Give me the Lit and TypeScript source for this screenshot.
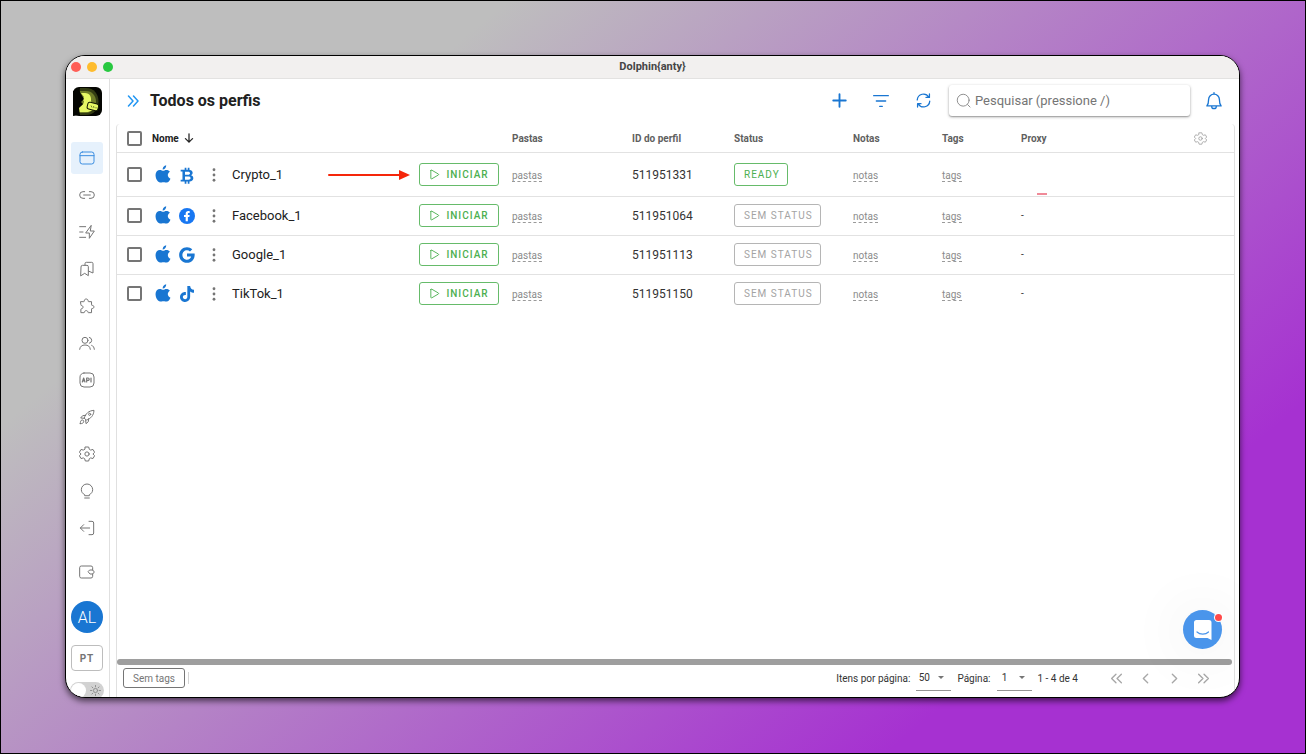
import { LitElement, html, svg, css, nothing, TemplateResult } from "lit";
import { customElement, state } from "lit/decorators.js";
import { classMap } from "lit/directives/class-map.js";

interface Profile {
  name: string;
  id: string;
  brand: string;
  ready: boolean;
  highlighted?: boolean;
}

const PROFILES: Profile[] = [
  { name: "Crypto_1", id: "511951331", brand: "bitcoin", ready: true, highlighted: true },
  { name: "Facebook_1", id: "511951064", brand: "facebook", ready: false },
  { name: "Google_1", id: "511951113", brand: "google", ready: false },
  { name: "TikTok_1", id: "511951150", brand: "tiktok", ready: false },
];

// Stroke icons, drawn on a 24 unit grid.
const LINE: Record<string, TemplateResult> = {
  browser: svg`<rect x="1.5" y="3" width="21" height="18" rx="3.5"/><path d="M1.5 8.5h21"/>`,
  link: svg`<path d="M8.500 7H6a5 5 0 0 0 0 10h2.500M15.500 7H18a5 5 0 0 1 0 10h-2.500M7 12h10"/>`,
  automation: svg`<path d="M1 4h9M1 12h5M1 20h9M18 2.500 10 13.500h5.500v8L23 10.500h-5.500z"/>`,
  bookmarks: svg`<path d="M3 8.500a2 2 0 0 1 2-2h7a2 2 0 0 1 2 2V22l-5.500-3.500L3 22zM9 6.500V4a2 2 0 0 1 2-2h8a2 2 0 0 1 2 2v14l-7-3"/>`,
  puzzle: svg`<path d="M4 5.500h4.200c.6 0 .9-.3.9-.9C9.100 2.500 10.300 1.500 12 1.500s2.900 1 2.900 3.100c0 .6.300.9.900.9H20v4.700c0 .6.300.8.900.8 1.700 0 2.600.9 2.600 2.400s-.9 2.400-2.600 2.400c-.6 0-.9.200-.9.800V22h-4.600c-.5 0-.7-.3-.8-.8-.3-1.600-1.200-2.300-2.600-2.300s-2.300.7-2.600 2.300c-.1.500-.3.800-.8.800H4v-4.900c0-.6.200-.8.700-.9 1.700-.2 2.500-1.100 2.500-2.500s-.8-2.300-2.500-2.500c-.5-.1-.7-.3-.7-.9z" transform="translate(-1.200 0)"/>`,
  users: svg`<circle cx="9" cy="8" r="4.500"/><path d="M1 21.500c.5-4.500 3.500-6.500 8-6.500s7.500 2 8 6.500M15.500 3.600a4.500 4.500 0 0 1 0 8.800M19 15.500c2.300.8 3.700 2.800 4 6"/>`,
  api: svg`<rect x="1.500" y="1.500" width="21" height="21" rx="6"/><path d="m5 15 2-6 2 6M5.700 13.200h2.600M11.500 15V9h2a1.700 1.700 0 0 1 0 3.600h-2M18 9v6" stroke-width="1.800"/>`,
  rocket: svg`<path d="M8 13c2-6 6.500-10.500 14.500-11C22 10 17.500 14.500 11.500 16.500zM10 9.500 5.500 10 2.500 13.500 8 14M14.500 14.500 14 19l-3.500 3-.500-5M2 22c0-3 .5-5 2.500-5.500S7.500 18 7 19.500 5 22 2 22z"/><circle cx="16" cy="8" r="1.600"/>`,
  gear: svg`<circle cx="12" cy="12" r="3.200"/><path d="M9.500 1.500h5l1 3.500 2 1.100 3.500-.9 2.400 4.200-2.500 2.600 2.500 2.600-2.400 4.200-3.500-.9-2 1.100-1 3.500h-5l-1-3.500-2-1.100-3.500.9L.6 14.600 3.100 12 .6 9.400 3 5.200l3.500.9 2-1.100z"/>`,
  bulb: svg`<path d="M8.500 18.500v-1C5.500 16 3.500 13.500 3.500 10a8.500 8.500 0 0 1 17 0c0 3.500-2 6-5 7.500v1zM8.500 22.500h7"/>`,
  exit: svg`<path d="M15 2h4.500A2.500 2.500 0 0 1 22 4.500v15a2.500 2.500 0 0 1-2.500 2.500H15M16 12H2M7 7l-5 5 5 5"/>`,
  wallet: svg`<path d="M20.500 9V5.500A2.500 2.500 0 0 0 18 3H3.500A2.500 2.500 0 0 0 1 5.500v13A2.500 2.500 0 0 0 3.500 21H18a2.500 2.500 0 0 0 2.500-2.500V15M16.500 9h4l2.500 3-2.500 3h-4L14 12z"/>`,
  expand: svg`<path d="m3 2 9 10-9 10M13 2l9 10-9 10"/>`,
  first: svg`<path d="m11 4-8 8 8 8M21 4l-8 8 8 8"/>`,
  prev: svg`<path d="m16 4-8 8 8 8"/>`,
  next: svg`<path d="m8 4 8 8-8 8"/>`,
  last: svg`<path d="m3 4 8 8-8 8M13 4l8 8-8 8"/>`,
  plus: svg`<path d="M12 2v20M2 12h20"/>`,
  filter: svg`<path d="M1 4h22M5 12h14M10 20h4"/>`,
  refresh: svg`<path d="M2 11A10 10 0 0 1 20.500 6.500M22 13A10 10 0 0 1 3.500 17.500M21.500 1.500v5.500H16M2.500 22.500V17H8"/>`,
  bell: svg`<path d="M2.500 18.500h19c-1.800-2-2.300-4-2.300-8.500a7.200 7.200 0 0 0-14.400 0c0 4.500-.5 6.500-2.300 8.500zM9 19.500a3 2.500 0 0 0 6 0M12 2.500V1"/>`,
  search: svg`<circle cx="11.500" cy="11.500" r="9.500"/><path d="m18.500 18.500 4 4"/>`,
  play: svg`<path d="M4 3.500v17c0 1 1 1.500 2 1L20.500 13c.8-.5.8-1.500 0-2L6 2.500c-1-.5-2 0-2 1z"/>`,
  down: svg`<path d="M12 2v20M3.500 13.500 12 22l8.500-8.500"/>`,
  sun: svg`<circle cx="12" cy="12" r="4.500"/><path d="M12 1v3M12 20v3M1 12h3M20 12h3M4.200 4.200l2.100 2.100M17.700 17.700l2.100 2.100M4.200 19.800l2.100-2.100M17.700 6.300l2.100-2.100"/>`,
};

// Filled marks, drawn on a 24 unit grid.
const SOLID: Record<string, TemplateResult> = {
  apple: svg`<path transform="translate(0 -1.500)" d="M17 6c2.300 0 4.200 1 5.300 2.700-4.400 2.600-3.900 8.500.9 10.300-1.300 3-3.300 5.800-5.600 5.800-1.900 0-2.600-.600-4.900-.600s-3.100.600-4.900.600C4 24.800.8 18.800.8 13.600.8 8.700 3.900 6 7.300 6c2.100 0 3.800 1.200 5 1.200S15 6 17 6zM16.800-1.300c.3 3.300-2.300 6.500-5.300 6.500C11.200 2 13.800-1 16.800-1.300z"/>`,
  bitcoin: svg`<path fill-rule="evenodd" transform="translate(.500 1)" d="M2 3h6V0h2.600v3h2V0h2.600v3.200c3 .5 4.800 2 4.800 4.600 0 1.700-.9 3-2.400 3.700 2.200.7 3.400 2.200 3.400 4.300 0 3-2.200 4.700-5.800 5V24h-2.600v-3.100h-2V24H8v-3.100H2v-2.700h2.700V5.700H2zM8.500 6v4.500h4.300c2 0 3.200-.7 3.200-2.200S14.800 6 12.800 6zm0 7.200V18h5c2.200 0 3.400-.8 3.400-2.400s-1.200-2.400-3.400-2.400z"/>`,
  facebook: svg`<circle cx="12" cy="12" r="12" fill="#1877f2"/><path fill="#fff" d="M10 20v-6.500H7.500v-3H10V8.800C10 6 11.500 4.600 14 4.600c1 0 2 .2 2 .2v2.700h-1.200c-1.100 0-1.500.7-1.500 1.500v1.500H16l-.5 3h-2.200V20z"/>`,
  google: svg`<path d="M12 9.800h11.400c.9 7.500-3.600 14-11.400 14C5.300 23.800.2 18.500.2 12S5.300.2 12 .2c3.200 0 5.800 1.100 7.900 3.100l-3.400 3.300C15.300 5.500 13.800 4.900 12 4.900c-3.900 0-6.900 3.200-6.900 7.100s3 7.100 6.900 7.100c3.300 0 5.500-1.700 6.300-4.700H12z"/>`,
  tiktok: svg`<path d="M12.500 0h4.200c.3 3.300 2.300 5.500 5.800 5.800V10c-2.200 0-4.200-.7-5.800-1.900v8.200c0 4.700-3.400 7.700-7.500 7.700-4.400 0-7.700-3.300-7.700-7.500 0-4.600 4-8 8.800-7.400v4.400c-2.500-.6-4.500.9-4.500 3 0 1.900 1.500 3.300 3.400 3.300 2 0 3.300-1.500 3.300-3.600z"/>`,
  dots: svg`<circle cx="12" cy="3" r="2.400"/><circle cx="12" cy="12" r="2.400"/><circle cx="12" cy="21" r="2.400"/>`,
};

const line = (name: string, size = 16, weight = 1.5) => html`<svg
  width=${size} height=${size} viewBox="0 0 24 24" fill="none" stroke="currentColor"
  stroke-width=${weight} stroke-linecap="round" stroke-linejoin="round" aria-hidden="true"
>${LINE[name]}</svg>`;

const solid = (name: string, size = 16) => html`<svg
  width=${size} height=${size} viewBox="0 0 24 24" fill="currentColor" overflow="visible" aria-hidden="true"
>${SOLID[name]}</svg>`;

const shared = css`
  * { box-sizing: border-box; }
  svg { display: block; flex: none; }
  button, input, select { font: inherit; margin: 0; padding: 0; color: inherit; }
  button { display: flex; align-items: center; justify-content: center; background: none; border: 0; cursor: pointer; }
`;

@customElement("side-nav")
class SideNav extends LitElement {
  static styles = [shared, css`
    :host {
      display: flex; flex-direction: column; align-items: center; width: 44px; flex: none;
      padding: 8px 1px 0 0; border-right: 1px solid #e0e0e0; overflow: hidden; color: #757575;
    }
    .logo { margin-bottom: 26px; }
    .links { display: flex; flex-direction: column; flex: none; gap: 5px; }
    .item {
      display: flex; flex: none; width: 32px; height: 32px; align-items: center; justify-content: center;
      border-radius: 3px; color: inherit; text-decoration: none;
    }
    .active { background: #e6f1fc; color: #3c8ee0; }
    .wallet { margin-top: 12px; }
    .avatar {
      width: 32px; height: 32px; flex: none; margin-top: 13px; border-radius: 50%;
      background: #1976d2; color: #fff; font-size: 16px; font-weight: 300;
    }
    .lang {
      width: 32px; height: 26px; flex: none; margin-top: 12px; border: 1px solid #bdbdbd; border-radius: 4px;
      font-size: 10px; font-weight: 700; letter-spacing: 1px;
    }
    .theme {
      display: flex; align-items: center; flex: none; width: 34px; height: 17px; margin-top: 11px;
      border-radius: 9px; background: #d2d2d2; color: #8a8a8a; position: relative;
    }
    .theme input { position: absolute; inset: 0; opacity: 0; width: 100%; height: 100%; }
    .knob { width: 15px; height: 15px; margin: 0 4px 0 1px; border-radius: 50%; background: #fff; }
  `];

  private items: [string, string][] = [
    ["browser", "Perfis"], ["link", "Proxies"], ["automation", "Automação"], ["bookmarks", "Favoritos"],
    ["puzzle", "Extensões"], ["users", "Usuários"], ["api", "API"], ["rocket", "Novidades"],
    ["gear", "Configurações"], ["bulb", "Ideias"], ["exit", "Sair"],
  ];

  render() {
    return html`
      <svg class="logo" width="29" height="29" viewBox="0 0 29 29" aria-hidden="true">
        <rect width="29" height="29" rx="6" fill="#050602"/>
        <path d="M7 1h6c8 0 12.500 6 12.500 13.500S21 28 13 28H4z" fill="#333c13"/>
        <path d="M7 4h6c6 0 10 5 10 10.500S19 26 13 26H5z" fill="#6f7d28"/>
        <path d="M8 6h4c5 0 6.500 4 6 8l2 9-5 2H6v-5c3-1 5-3 5-6-2-1-1-3 0-4z" fill="#e6f865"/>
        <path d="M0 4l6-1 2 4 3 5-3 3 2 2-4 4 1 7-7 1z" fill="#050602"/>
        <rect x="14.500" y="16" width="11" height="7" rx="2" fill="#e6f865" stroke="#111703" transform="rotate(14 20 19)"/>
        <path d="m18 18.500 1 2M20.500 19l.5 2M23 20v1.500" stroke="#5b6a1c" stroke-width=".8"/>
      </svg>
      <nav class="links">
        ${this.items.map(([icon, label], i) => html`
          <a class=${classMap({ item: true, active: i === 0 })} href="#" aria-label=${label}>${line(icon)}</a>`)}
      </nav>
      <a class="item wallet" href="#" aria-label="Carteira">${line("wallet")}</a>
      <button class="avatar">AL</button>
      <button class="lang">PT</button>
      <label class="theme"><input type="checkbox" aria-label="Tema escuro" /><span class="knob"></span>${line("sun", 11, 2)}</label>
    `;
  }
}

@customElement("profile-table")
class ProfileTable extends LitElement {
  static styles = [shared, css`
    :host { display: block; flex: 1; min-height: 0; overflow: hidden; }
    table { width: 100%; table-layout: fixed; border-collapse: separate; border-spacing: 0; }
    th, td { padding: 0; text-align: left; border-bottom: 1px solid #e2e2e2; }
    th { height: 29px; font-size: 10px; font-weight: 700; color: #5f5f5f; }
    td { height: 39px; padding-bottom: 1px; font-size: 12px; color: #333; }
    .tall td { height: 44px; padding-bottom: 0; }
    tbody tr:last-child td { height: 38px; border-bottom: 0; }
    .c-check { width: 35px; }
    .c-name { width: 267px; }
    .c-start { width: 93px; }
    .c-folder { width: 120px; }
    .c-id { width: 102px; }
    .c-status { width: 119px; }
    .c-notes { width: 89px; }
    .c-tags { width: 79px; }
    .c-gear { width: 40px; }
    .check {
      appearance: none; display: block; width: 15px; height: 15px; margin-left: 10px;
      border: 2px solid #757575; border-radius: 2px; background: #fff;
    }
    .check:checked { background: #1976d2; border-color: #1976d2; }
    .sort { gap: 5px; font-weight: 700; color: #212121; }
    .name { display: flex; align-items: center; padding-left: 3px; gap: 8px; color: #1976d2; }
    .more { width: 16px; height: 24px; color: #757575; margin-left: 3px; }
    .label { font-size: 13px; color: #212121; padding-left: 2px; }
    .arrow { margin: 0 9px 0 auto; }
    .start {
      width: 80px; height: 23px; gap: 6px; border: 1px solid #66bb6a; border-radius: 3px;
      color: #4caf50; font-size: 10px; font-weight: 500; letter-spacing: 1px;
    }
    .status {
      display: inline-flex; height: 23px; padding: 0 7px 0 9px; border: 1px solid #b5b5b5; border-radius: 3px;
      color: #a3a3a3; font-size: 10px; letter-spacing: 1px; vertical-align: middle;
    }
    .ready { border-color: #66bb6a; color: #4caf50; }
    .edit { color: #8b8b8b; font-size: 10px; line-height: 12px; text-decoration: none; border-bottom: 1px dashed #9a9a9a; }
    .gear { color: #9e9e9e; }
    .error { vertical-align: bottom; }
    .mark { display: block; width: 10px; height: 2px; margin: 0 0 1px 16px; background: #f08a98; }
    .dash { font-size: 10px; }
  `];

  @state() private selected = new Set<string>();

  private toggle(id: string) {
    const next = new Set(this.selected);
    next.has(id) ? next.delete(id) : next.add(id);
    this.selected = next;
  }

  private toggleAll() {
    this.selected = this.selected.size === PROFILES.length ? new Set() : new Set(PROFILES.map((p) => p.id));
  }

  private row(p: Profile) {
    return html`<tr class=${classMap({ tall: !!p.highlighted })}>
      <td><input class="check" type="checkbox" aria-label=${p.name}
        .checked=${this.selected.has(p.id)} @change=${() => this.toggle(p.id)} /></td>
      <td><div class="name">
        ${solid("apple", 16)}${solid(p.brand)}
        <button class="more" aria-label="Mais ações">${solid("dots", 14)}</button>
        <span class="label">${p.name}</span>
        ${p.highlighted ? html`<svg class="arrow" width="82" height="10" viewBox="0 0 82 10" aria-hidden="true">
          <path d="M1 5h72" stroke="#f5260a" stroke-width="2" stroke-linecap="round"/><path d="M71 0l11 5-11 5z" fill="#f5260a"/></svg>` : nothing}
      </div></td>
      <td><button class="start">${line("play", 11, 2)}INICIAR</button></td>
      <td><a class="edit" href="#">pastas</a></td>
      <td>${p.id}</td>
      <td><button class=${classMap({ status: true, ready: p.ready })}>${p.ready ? "READY" : "SEM STATUS"}</button></td>
      <td><a class="edit" href="#">notas</a></td>
      <td><a class="edit" href="#">tags</a></td>
      ${p.highlighted ? html`<td class="error"><span class="mark"></span></td>` : html`<td class="dash">-</td>`}
      <td></td>
    </tr>`;
  }

  render() {
    return html`<table>
      <colgroup>
        <col class="c-check" /><col class="c-name" /><col class="c-start" /><col class="c-folder" /><col class="c-id" />
        <col class="c-status" /><col class="c-notes" /><col class="c-tags" /><col /><col class="c-gear" />
      </colgroup>
      <thead><tr>
        <th><input class="check" type="checkbox" aria-label="Selecionar todos"
          .checked=${this.selected.size === PROFILES.length} @change=${this.toggleAll} /></th>
        <th><button class="sort">Nome ${line("down", 10, 3)}</button></th>
        <th></th><th>Pastas</th><th>ID do perfil</th><th>Status</th><th>Notas</th><th>Tags</th><th>Proxy</th>
        <th><button class="gear" aria-label="Colunas">${line("gear", 13, 1.5)}</button></th>
      </tr></thead>
      <tbody>${PROFILES.map((p) => this.row(p))}</tbody>
    </table>`;
  }
}

@customElement("table-footer")
class TableFooter extends LitElement {
  static styles = [shared, css`
    :host { display: flex; align-items: center; flex: none; height: 31px; padding: 0 23px 7px 6px; font-size: 10px; color: #333; }
    .tag { height: 20px; padding: 0 9px; border: 1px solid #757575; border-radius: 3px; color: #757575; }
    .rule { width: 1px; height: 12px; margin-left: 3px; background: #d5d5d5; }
    .pager { display: flex; align-items: center; gap: 6px; margin-left: auto; }
    .field { display: flex; align-items: center; gap: 6px; }
    .pick { display: grid; align-items: center; width: 35px; height: 26px; border-bottom: 1px solid #949494; }
    select {
      grid-area: 1 / 1; appearance: none; width: 100%; height: 20px; padding-right: 19px;
      border: 0; background: none; text-align-last: center;
    }
    .caret { grid-area: 1 / 1; justify-self: end; margin-right: 7px; pointer-events: none; }
    .steps { display: flex; gap: 13px; margin-left: 24px; color: #a8a8a8; }
    .steps button { width: 16px; height: 16px; }
  `];

  private pick(id: string, label: string, value: string) {
    return html`<div class="field"><label for=${id}>${label}</label>
      <span class="pick"><select id=${id}><option>${value}</option></select>
        <svg class="caret" width="6" height="3" viewBox="0 0 6 3" aria-hidden="true"><path d="M0 0h6L3 3z" fill="#757575"/></svg>
      </span></div>`;
  }

  render() {
    return html`
      <button class="tag">Sem tags</button><span class="rule"></span>
      <div class="pager">
        ${this.pick("size", "Itens por página:", "50")}
        ${this.pick("page", "Página:", "1")}
        <span>1 - 4 de 4</span>
        <div class="steps">
          <button aria-label="Primeira página">${line("first", 13, 2.5)}</button>
          <button aria-label="Página anterior">${line("prev", 13, 2.5)}</button>
          <button aria-label="Próxima página">${line("next", 13, 2.5)}</button>
          <button aria-label="Última página">${line("last", 13, 2.5)}</button>
        </div>
      </div>`;
  }
}

@customElement("app-root")
class AppRoot extends LitElement {
  static styles = [shared, css`
    :host {
      display: flex; box-sizing: border-box; height: 100vh; padding: 54px 65px 55px 64px; border: 1px solid #000;
      background: linear-gradient(140deg, #bebebe 23%, #a631d1 81%);
      font-family: Roboto, "Liberation Sans", sans-serif;
    }
    .window {
      position: relative; display: flex; flex-direction: column; flex: 1; min-width: 0; overflow: hidden;
      border: 1px solid #000; border-radius: 20px; background: #fff; box-shadow: 0 3px 6px rgba(0, 0, 0, 0.6);
    }
    .titlebar {
      display: grid; grid-template-columns: 1fr auto 1fr; align-items: center; height: 23px; flex: none;
      padding: 0 5px 1px; border-bottom: 1px solid #e3e2e1; background: #f2f0ef;
      font-size: 11px; font-weight: 700; color: #454545;
    }
    .lights { display: flex; gap: 6px; }
    .light { width: 10px; height: 10px; border-radius: 50%; }
    .close { background: #ff5f57; }
    .min { background: #febc2e; }
    .max { background: #28c840; }
    .body { display: flex; flex: 1; min-height: 0; }
    .main { display: flex; flex-direction: column; flex: 1; min-width: 0; padding: 0 4px 0 6px; }
    .toolbar { display: flex; align-items: center; gap: 18px; height: 45px; flex: none; padding: 0 9px 2px 11px; color: #1976d2; }
    .heading { display: flex; align-items: center; gap: 11px; margin-right: auto; }
    h1 { margin: 0; font-size: 16px; font-weight: 700; line-height: 20px; color: #212121; }
    .tool { width: 24px; height: 24px; }
    .expand { color: #2196f3; }
    .find { display: flex; align-items: center; gap: 12px; margin-left: -4px; }
    .search {
      display: flex; align-items: center; gap: 4px; width: 241px; height: 31px; padding: 0 7px; border-radius: 3px;
      background: #fff; color: #8a8a8a; box-shadow: 0 1px 3px rgba(0, 0, 0, 0.35), 0 1px 1px rgba(0, 0, 0, 0.15);
    }
    .search input { flex: 1; min-width: 0; border: 0; outline: 0; background: none; font-size: 13px; color: #333; }
    .search input::placeholder { color: #757575; opacity: 1; }
    .card {
      display: flex; flex-direction: column; flex: 1; min-height: 0;
      border: 1px solid #e0e0e0; border-width: 0 1px; border-radius: 4px 4px 0 0;
    }
    .scroll { height: 6px; flex: none; margin: 0 2px 1px 0; border-radius: 3px; background: #9e9e9e; }
    .chat {
      position: absolute; right: 17px; bottom: 48px; width: 39px; height: 39px; border-radius: 50%;
      background: #4a95eb; box-shadow: 0 2px 60px rgba(0, 0, 0, 0.1);
    }
    .badge { position: absolute; top: 4px; right: 0; width: 7px; height: 7px; border-radius: 50%; background: #ff4a4a; box-shadow: 0 0 0 1px #fff; }
  `];

  render() {
    return html`<div class="window">
      <div class="titlebar">
        <div class="lights"><span class="light close"></span><span class="light min"></span><span class="light max"></span></div>
        <span>Dolphin{anty}</span>
      </div>
      <div class="body">
        <side-nav></side-nav>
        <main class="main">
          <div class="toolbar">
            <div class="heading">
              <button class="expand" aria-label="Expandir menu">${line("expand", 12, 3)}</button>
              <h1>Todos os perfis</h1>
            </div>
            <button class="tool" aria-label="Criar perfil">${line("plus", 15, 3)}</button>
            <button class="tool" aria-label="Filtros">${line("filter", 16, 2)}</button>
            <button class="tool" aria-label="Atualizar">${line("refresh", 15, 2)}</button>
            <div class="find">
              <label class="search">${line("search", 15, 1.5)}<input type="text" placeholder="Pesquisar (pressione /)" aria-label="Pesquisar" /></label>
              <button class="tool" aria-label="Notificações">${line("bell", 18, 1.8)}</button>
            </div>
          </div>
          <section class="card">
            <profile-table></profile-table>
            <div class="scroll"></div>
            <table-footer></table-footer>
          </section>
        </main>
      </div>
      <button class="chat" aria-label="Abrir chat">
        <svg width="18" height="20" viewBox="0 0 18 20" aria-hidden="true">
          <path d="M2.500 0h12.500A2.500 2.500 0 0 1 17.500 2.500V20l-4-2H2.500A2.500 2.500 0 0 1 0 15.500v-13A2.500 2.500 0 0 1 2.500 0z" fill="#fff"/>
          <path d="M3 12c3 2.700 8.500 2.700 11.500 0" fill="none" stroke="#4a95eb" stroke-width="1.200" stroke-linecap="round"/>
        </svg>
        <span class="badge"></span>
      </button>
    </div>`;
  }
}
